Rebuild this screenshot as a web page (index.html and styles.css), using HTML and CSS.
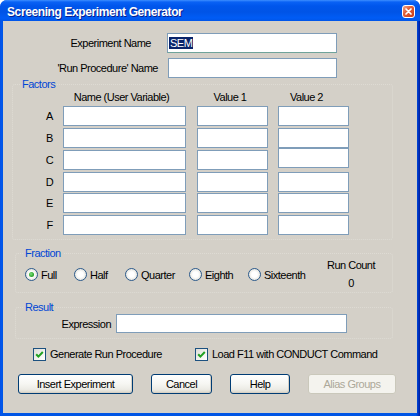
FILE: index.html
```html
<!DOCTYPE html>
<html>
<head>
<meta charset="utf-8">
<title>Screening Experiment Generator</title>
<link rel="stylesheet" href="styles.css">
</head>
<body>
<div class="window">
  <div class="titlebar">
    <span class="title">Screening Experiment Generator</span>
    <span class="close"><svg width="11" height="11" viewBox="0 0 11 11"><path d="M3 3 L8 8 M8 3 L3 8" stroke="#fff" stroke-width="1.7" stroke-linecap="round"/></svg></span>
  </div>
  <div class="client">
    <div class="row r1"><span class="lbl lbl1">Experiment Name</span><div class="tb tb1"><span class="sel">SEM</span></div></div>
    <div class="row r2"><span class="lbl lbl2">'Run Procedure' Name</span><input class="tb tb2" type="text"></div>

    <fieldset class="grp factors">
      <legend>Factors</legend>
      <div class="fhead"><span class="h-name">Name (User Variable)</span><span class="h-v1">Value 1</span><span class="h-v2">Value 2</span></div>
      <div class="frow"><span class="letter">A</span><input class="tb nm" type="text"><input class="tb v1" type="text"><input class="tb v2" type="text"></div>
      <div class="frow"><span class="letter">B</span><input class="tb nm" type="text"><input class="tb v1" type="text"><input class="tb v2" type="text"></div>
      <div class="frow"><span class="letter">C</span><input class="tb nm" type="text"><input class="tb v1" type="text"><input class="tb v2 up" type="text"></div>
      <div class="frow"><span class="letter">D</span><input class="tb nm" type="text"><input class="tb v1" type="text"><input class="tb v2" type="text"></div>
      <div class="frow tight"><span class="letter">E</span><input class="tb nm" type="text"><input class="tb v1" type="text"><input class="tb v2" type="text"></div>
      <div class="frow"><span class="letter">F</span><input class="tb nm" type="text"><input class="tb v1" type="text"><input class="tb v2" type="text"></div>
    </fieldset>

    <fieldset class="grp fraction">
      <legend>Fraction</legend>
      <div class="frac-body">
        <div class="radios">
          <span class="ropt"><span class="radio on"><span class="dot"></span></span>Full</span>
          <span class="ropt"><span class="radio"></span>Half</span>
          <span class="ropt"><span class="radio"></span>Quarter</span>
          <span class="ropt"><span class="radio"></span>Eighth</span>
          <span class="ropt"><span class="radio"></span>Sixteenth</span>
        </div>
        <div class="runcount"><div>Run Count</div><div class="rc-val">0</div></div>
      </div>
    </fieldset>

    <fieldset class="grp result">
      <legend>Result</legend>
      <div class="row exprow"><span class="lbl lbl3">Expression</span><input class="tb expr" type="text"></div>
    </fieldset>

    <div class="checks">
      <span class="chk"><span class="cb"><svg width="11" height="11" viewBox="0 0 11 11"><path d="M2.2 5.2 L4.4 7.6 L8.8 3" fill="none" stroke="#21A121" stroke-width="2"/></svg></span>Generate Run Procedure</span>
      <span class="chk"><span class="cb"><svg width="11" height="11" viewBox="0 0 11 11"><path d="M2.2 5.2 L4.4 7.6 L8.8 3" fill="none" stroke="#21A121" stroke-width="2"/></svg></span>Load F11 with CONDUCT Command</span>
    </div>

    <div class="buttons">
      <button class="btn">Insert Experiment</button>
      <button class="btn">Cancel</button>
      <button class="btn">Help</button>
      <button class="btn" disabled>Alias Groups</button>
    </div>
  </div>
</div>
</body>
</html>
```
FILE: styles.css
```css
* { box-sizing: border-box; }
html, body { margin: 0; padding: 0; }
body {
  width: 420px;
  height: 416px;
  overflow: hidden;
  font-family: "Liberation Sans", Arial, sans-serif;
  font-size: 11px;
  letter-spacing: -0.5px;
  color: #000;
  background: #fff;
}
.window {
  width: 420px;
  height: 416px;
  display: flex;
  flex-direction: column;
  background: linear-gradient(to right, #0A4CE0 0, #0058EE 1px, #0055E5 3px, #0055E5 416px, #0038C8 418px, #001C9A 420px);
  border-radius: 7px 7px 0 0;
  overflow: hidden;
}
.titlebar {
  height: 21px;
  flex: none;
  display: flex;
  align-items: center;
  justify-content: space-between;
  padding: 2px 5px 0 7px;
  background: linear-gradient(to bottom, #3D8FFF 0, #0A62F5 2px, #0056EC 6px, #0054E6 12px, #005CF5 18px, #0055E8 21px);
}
.title {
  color: #fff;
  font-weight: bold;
  font-size: 12px;
  letter-spacing: -0.4px;
  text-shadow: 1px 1px #0A1E8C;
}
.close {
  width: 13px;
  height: 13px;
  border: 1px solid #fff;
  border-radius: 3px;
  background: linear-gradient(135deg, #F2A58C 0%, #E0603A 40%, #C83A14 100%);
  display: flex;
  align-items: center;
  justify-content: center;
}
.client {
  flex: none;
  height: 392px;
  margin: 0 3px 3px 3px;
  background: #D4D0C8;
  padding-top: 12px;
  display: flex;
  flex-direction: column;
  align-items: flex-start;
}
.row { display: flex; align-items: center; }
.r1 { height: 20px; }
.r2 { height: 20px; margin-top: 5px; }
.lbl { text-align: right; flex: none; }
.lbl1 { width: 148px; margin-right: 16px; }
.lbl2 { width: 155px; margin-right: 10px; }
.tb {
  height: 20px;
  border: 1px solid #7F9DB9;
  background: #fff;
  margin: 0;
  padding: 0 1px;
  font: inherit;
  outline: none;
  flex: none;
  display: block;
}
.tb1 { width: 170px; display: flex; align-items: center; border-bottom-color: #6FA39A; }
.tb2 { width: 169px; }
.sel {
  background: #0A246A;
  color: #fff;
  line-height: 12px;
  padding: 0 1px;
}

.grp {
  margin: 0;
  min-width: 0;
  border: 1px dotted #DEDBD4;
  border-radius: 3px;
}
.grp legend {
  color: #0046D5;
  padding: 0 2px;
  margin-left: 7px;
  line-height: 12px;
}
.factors {
  margin-left: 9px;
  width: 381px;
  padding: 1px 0 4px 0;
}
.fhead { display: flex; height: 12px; line-height: 12px; padding-left: 50px; margin-bottom: 3px; white-space: nowrap; }
.h-name { width: 117px; text-align: center; }
.h-v1 { width: 66px; margin-left: 17px; text-align: center; }
.h-v2 { width: 57px; margin-left: 15px; text-align: center; }
.frow { display: flex; align-items: flex-start; height: 20px; padding-left: 30px; }
.frow + .frow { margin-top: 2px; }
.frow.tight { margin-top: 1px; }
.letter { width: 13px; margin-right: 7px; text-align: center; line-height: 20px; }
.nm { width: 123px; margin-right: 11px; }
.v1 { width: 71px; margin-right: 10px; }
.v2 { width: 71px; }
.v2.up { margin-top: -2px; }

.fraction {
  margin-top: 8px;
  margin-left: 12px;
  width: 378px;
  padding: 0 0 3px 0;
}
.fraction legend { line-height: 11px; }
.frac-body { display: flex; align-items: flex-start; }
.radios {
  display: grid;
  grid-template-columns: 49px 51px 64px 59px auto;
  margin-top: 9px;
  margin-left: 9px;
  height: 13px;
}
.ropt { display: flex; align-items: center; white-space: nowrap; }
.radio {
  width: 13px;
  height: 13px;
  border-radius: 50%;
  border: 1px solid #2C5A8C;
  background: radial-gradient(circle at 50% 50%, #FFFFFF 35%, #E4E3DC 75%, #CFCDC4 100%);
  margin-right: 3px;
  display: flex;
  align-items: center;
  justify-content: center;
  flex: none;
}
.dot {
  width: 5px;
  height: 5px;
  border-radius: 50%;
  background: radial-gradient(circle at 40% 40%, #7FE07F 0%, #2EA82E 60%, #1C8A1C 100%);
}
.runcount {
  margin-left: auto;
  margin-right: 11px;
  width: 60px;
  text-align: center;
  line-height: 12px;
  white-space: nowrap;
}
.rc-val { margin-top: 6px; }

.result {
  margin-top: 8px;
  margin-left: 12px;
  width: 378px;
  padding: 1px 0 5px 0;
}
.exprow { height: 19px; }
.lbl3 { width: 95px; margin-right: 5px; }
.expr { width: 231px; height: 19px; }

.checks {
  margin-top: 8px;
  margin-left: 30px;
  height: 14px;
  display: grid;
  grid-template-columns: 162px auto;
  align-items: center;
}
.chk { display: flex; align-items: center; white-space: nowrap; }
.cb {
  width: 13px;
  height: 13px;
  border: 1px solid #1C5180;
  background: linear-gradient(135deg, #DCDCD7 0%, #F4F4F0 60%, #FFFFFF 100%);
  margin-right: 4px;
  display: flex;
  align-items: center;
  justify-content: center;
  flex: none;
}

.buttons {
  margin-top: 13px;
  margin-left: 15px;
  display: grid;
  grid-template-columns: 115px 61px 60px 88px;
  column-gap: 18px;
}
.btn {
  height: 20px;
  margin: 0;
  padding: 0;
  font: inherit;
  letter-spacing: -0.5px;
  color: #000;
  border: 1px solid #003C74;
  border-radius: 3px;
  background: linear-gradient(to bottom, #FFFFFF 0%, #F6F6F2 50%, #ECEBE5 80%, #D8D4C8 100%);
  box-shadow: inset -1px -1px 0 #D6D0C5;
}
.btn:disabled {
  color: #ACA899;
  border-color: #CAC8BB;
  background: #F4F3EE;
  box-shadow: none;
}
```
